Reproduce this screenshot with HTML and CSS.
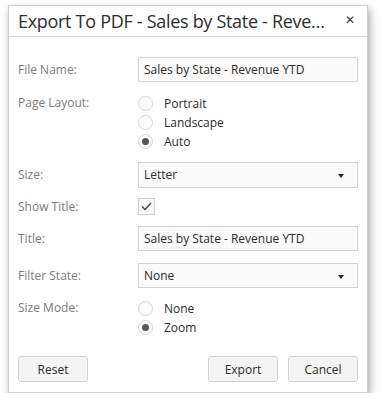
FILE: index.html
```html
<!DOCTYPE html>
<html lang="en">
<head>
	<meta charset="UTF-8">
	<title>Export To PDF</title>
	<link rel="stylesheet" href="styles.css">
</head>
<body>
	<div class="dialog">
		<div class="dialog-header">
			<span class="dialog-title">Export To PDF - Sales by State - Revenue YTD</span>
			<span class="dialog-close">&#x2715;</span>
		</div>
		<div class="dialog-body">
			<div class="row row-input">
				<span class="label">File Name:</span>
				<div class="editor text-box">Sales by State - Revenue YTD</div>
			</div>
			<div class="row">
				<span class="label label-top">Page Layout:</span>
				<div class="radio-list">
					<div class="radio-item"><span class="radio"></span>Portrait</div>
					<div class="radio-item"><span class="radio"></span>Landscape</div>
					<div class="radio-item"><span class="radio checked"></span>Auto</div>
				</div>
			</div>
			<div class="row row-select">
				<span class="label">Size:</span>
				<div class="editor text-box select">Letter<span class="arrow"></span></div>
			</div>
			<div class="row row-check">
				<span class="label">Show Title:</span>
				<span class="checkbox">
					<svg width="11" height="9" viewBox="0 0 11 9"><path d="M1 4.5 L4 7.5 L10 1" fill="none" stroke="#444" stroke-width="1.4"/></svg>
				</span>
			</div>
			<div class="row row-input">
				<span class="label">Title:</span>
				<div class="editor text-box">Sales by State - Revenue YTD</div>
			</div>
			<div class="row row-input row-filter">
				<span class="label">Filter State:</span>
				<div class="editor text-box select">None<span class="arrow"></span></div>
			</div>
			<div class="row">
				<span class="label label-top">Size Mode:</span>
				<div class="radio-list">
					<div class="radio-item"><span class="radio"></span>None</div>
					<div class="radio-item"><span class="radio checked"></span>Zoom</div>
				</div>
			</div>
		</div>
		<div class="dialog-footer">
			<button class="btn">Reset</button>
			<div class="footer-right">
				<button class="btn">Export</button>
				<button class="btn">Cancel</button>
			</div>
		</div>
	</div>
</body>
</html>
```

FILE: styles.css
```css
* {
	box-sizing: border-box;
}

body {
	margin: 0;
	padding: 5px 0 0 8px;
	font-family: 'Open Sans', 'Noto Sans', sans-serif;
	font-size: 12px;
	color: #333;
	background-color: #fff;
}

.dialog {
	width: 360px;
	height: 388px;
	display: flex;
	flex-direction: column;
	border: 1px solid #cfcfcf;
	background-color: #fff;
	box-shadow: 2px 4px 8px 0 rgba(0,0,0,0.35);
}

.dialog-header {
	height: 31px;
	flex: none;
	display: flex;
	align-items: center;
	padding: 0 12px 0 9px;
	border-bottom: 1px solid #d4d4d4;
}

.dialog-title {
	width: 308px;
	flex: none;
	font-size: 18px;
	letter-spacing: -0.3px;
	color: #2d2d2d;
	white-space: nowrap;
	overflow: hidden;
	text-overflow: ellipsis;
}

.dialog-close {
	margin-left: auto;
	font-size: 12px;
	color: #333;
	line-height: 1;
	margin-top: -2px;
}

.dialog-body {
	padding: 20px 9px 0 9px;
}

.row {
	display: flex;
	align-items: flex-start;
	margin-bottom: 11px;
}

.label {
	width: 120px;
	flex: none;
	color: #7b7b7b;
	line-height: 25px;
}

.label-top {
	line-height: 19px;
}

.editor {
	width: 220px;
}

.text-box {
	height: 25px;
	line-height: 23px;
	padding: 0 5px;
	border: 1px solid #d3d3d3;
	background-color: #fafafa;
	color: #2b2b2b;
	white-space: nowrap;
}

.select {
	position: relative;
}

.row-select .text-box {
	height: 26px;
	line-height: 24px;
}

.row-select {
	margin-bottom: 10px;
}

.row-check {
	align-items: center;
	height: 17px;
}

.row-check .label {
	line-height: 17px;
}

.row-filter {
	margin-top: 12px;
	margin-bottom: 10px;
}

.arrow {
	position: absolute;
	right: 13px;
	top: 11px;
	border-left: 3.5px solid transparent;
	border-right: 3.5px solid transparent;
	border-top: 4px solid #222;
}

.checkbox {
	width: 17px;
	height: 17px;
	border: 1px solid #cfcfcf;
	background-color: #f8f8f8;
	display: flex;
	align-items: center;
	justify-content: center;
}

.radio-list {
	display: flex;
	flex-direction: column;
	padding-top: 1px;
}

.radio-item {
	display: flex;
	align-items: center;
	height: 19px;
	color: #2b2b2b;
}

.radio {
	width: 15px;
	height: 15px;
	border-radius: 50%;
	border: 1px solid #d5d5d5;
	background-color: #fbfbfb;
	margin-right: 11px;
	position: relative;
}

.radio.checked::after {
	content: '';
	position: absolute;
	left: 3px;
	top: 3px;
	width: 7px;
	height: 7px;
	border-radius: 50%;
	background-color: #555;
}

.dialog-footer {
	display: flex;
	justify-content: space-between;
	padding: 0 9px 10px;
	margin-top: auto;
}

.footer-right {
	display: flex;
	gap: 10px;
}

.btn {
	width: 70px;
	height: 26px;
	font-family: inherit;
	font-size: 12px;
	color: #2b2b2b;
	background-color: #f4f4f4;
	border: 1px solid #d2d2d2;
	border-radius: 3px;
	padding: 0;
}
```
